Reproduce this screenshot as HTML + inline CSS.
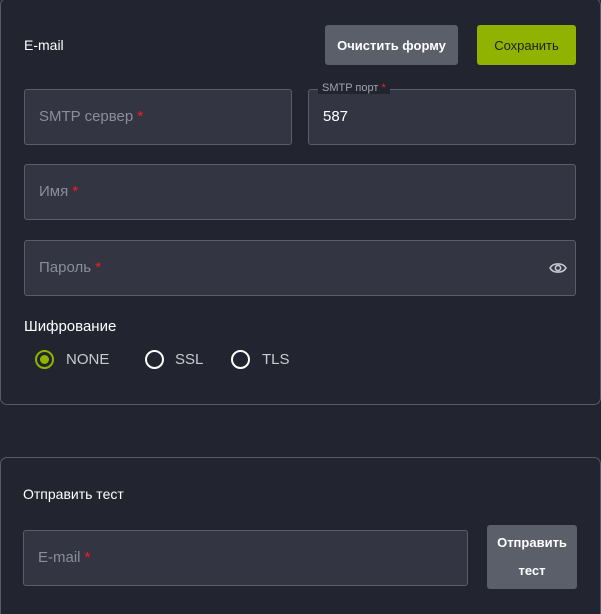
<!DOCTYPE html>
<html><head><meta charset="utf-8"><style>
*{box-sizing:border-box;margin:0;padding:0}
html,body{width:601px;height:614px;overflow:hidden}
body{background:#22252f;font-family:"Liberation Sans",sans-serif;position:relative;color:#fff}
.card{position:absolute;border:1px solid #555a66;border-radius:7px}
.inp{position:absolute;background:#333642;border:1px solid #5a5e6a;border-radius:3px;height:56px}
.ph{position:absolute;left:14px;top:18px;font-size:15px;color:#8a8e99}
.r{color:#ff1a1a}
.btn{position:absolute;border-radius:3px;font-size:13px;font-weight:bold;display:flex;align-items:center;justify-content:center;text-align:center}
.t{position:absolute;font-size:14px}
.rad{position:absolute;width:19px;height:19px;border-radius:50%;border:2px solid #fff}
.rl{position:absolute;font-size:15px;color:#c8cad0}
</style></head><body>
<div class="card" style="left:0;top:-2px;width:601px;height:407px"></div>
<div class="t" style="left:24px;top:37px">E-mail</div>
<div class="btn" style="left:325px;top:25px;width:133px;height:40px;background:#5a5f69;color:#fff">Очистить форму</div>
<div class="btn" style="left:477px;top:25px;width:99px;height:40px;background:#8fb300;color:#1d2010;font-weight:normal">Сохранить</div>
<div class="inp" style="left:24px;top:89px;width:268px"><span class="ph">SMTP сервер <span class="r">*</span></span></div>
<div class="inp" style="left:308px;top:89px;width:268px"><span class="ph" style="color:#fff;top:18px">587</span></div>
<div style="position:absolute;left:318px;top:82px;background:#22252f;padding:0 4px;font-size:11px;color:#a0a4ae">SMTP порт <span class="r">*</span></div>
<div class="inp" style="left:24px;top:164px;width:552px"><span class="ph">Имя <span class="r">*</span></span></div>
<div class="inp" style="left:24px;top:240px;width:552px"><span class="ph">Пароль <span class="r">*</span></span>
<svg style="position:absolute;left:524px;top:20px" width="18" height="14" viewBox="0 0 18 14"><path d="M1 7C4 1.5 14 1.5 17 7C14 12.5 4 12.5 1 7Z" fill="none" stroke="#c8cad0" stroke-width="1.6"/><circle cx="9" cy="7" r="2.6" fill="none" stroke="#c8cad0" stroke-width="1.6"/></svg></div>
<div class="t" style="left:24px;top:318px;font-size:15px">Шифрование</div>
<div class="rad" style="left:35px;top:350px;border-color:#8fb300"><div style="position:absolute;left:3px;top:3px;width:9px;height:9px;border-radius:50%;background:#8fb300"></div></div>
<div class="rl" style="left:66px;top:351px">NONE</div>
<div class="rad" style="left:145px;top:350px"></div>
<div class="rl" style="left:175px;top:351px">SSL</div>
<div class="rad" style="left:231px;top:350px"></div>
<div class="rl" style="left:262px;top:351px">TLS</div>
<div class="card" style="left:0;top:457px;width:601px;height:170px"></div>
<div class="t" style="left:23px;top:486px">Отправить тест</div>
<div class="inp" style="left:23px;top:530px;width:445px"><span class="ph">E-mail <span class="r">*</span></span></div>
<div class="btn" style="left:487px;top:525px;width:90px;height:64px;background:#5a5f69;line-height:28px">Отправить<br>тест</div>
</body></html>
